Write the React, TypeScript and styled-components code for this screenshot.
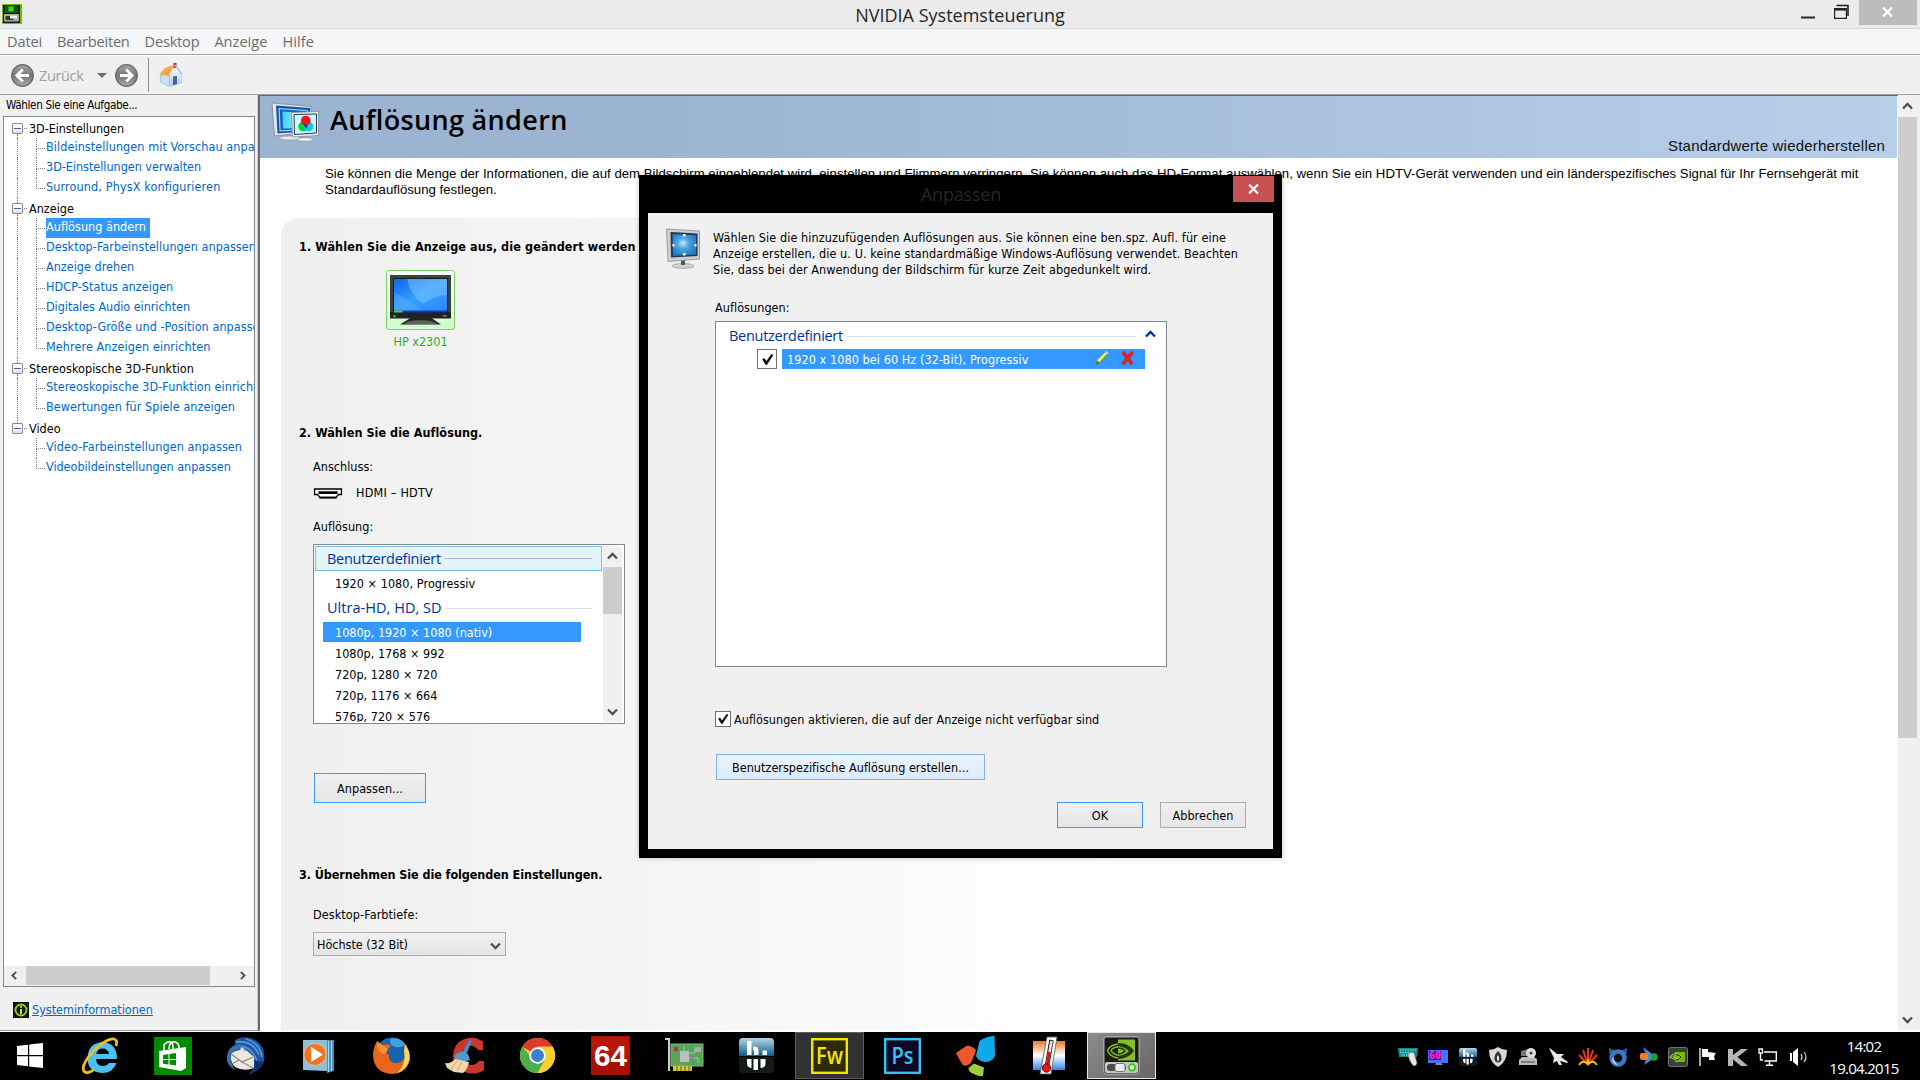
import React from "react";
import styled, { createGlobalStyle, css } from "styled-components";

const tahoma = '"DejaVu Sans Condensed", "DejaVu Sans", Tahoma, sans-serif';
const segoe = '"Open Sans", "Noto Sans", sans-serif';
const arial = '"Liberation Sans", Arial, sans-serif';

const Global = createGlobalStyle`
  * { box-sizing: border-box; }
  html, body { margin: 0; padding: 0; background: #000; }
  svg { display: block; flex: none; overflow: visible; }
`;

/* ---------- text ---------- */
const Text = styled.span<{ $ls?: number; $bold?: boolean; $color?: string }>`
  font-family: ${tahoma};
  font-size: 12.5px;
  line-height: 16px;
  white-space: nowrap;
  font-weight: ${(p) => (p.$bold ? 700 : 400)};
  letter-spacing: ${(p) => p.$ls ?? 0.04}px;
  color: ${(p) => p.$color ?? "#000"};
`;

const UiText = styled.span<{ $ls?: number; $size?: number; $color?: string }>`
  font-family: ${segoe};
  font-size: ${(p) => p.$size ?? 15}px;
  line-height: 20px;
  white-space: nowrap;
  letter-spacing: ${(p) => p.$ls ?? 0}px;
  color: ${(p) => p.$color ?? "#000"};
`;

/* ---------- window frame ---------- */
const Screen = styled.div`
  position: relative;
  width: 1920px;
  height: 1080px;
  overflow: hidden;
  display: flex;
  flex-direction: column;
  background: #f0f0f0;
`;

const TitleBar = styled.header`
  flex: none;
  height: 29px;
  display: grid;
  grid-template-columns: 1fr auto 1fr;
  align-items: start;
  background: #ebebeb;
  border-bottom: 1px solid #d9d9d9;
`;

const TitleIcon = styled.div`
  padding: 4px 0 0 2px;
`;

const WindowTitle = styled(UiText)`
  line-height: 30px;
`;

const CaptionButtons = styled.div`
  display: flex;
  justify-content: flex-end;
  padding-right: 3px;
`;

const CaptionButton = styled.div<{ $w: number; $close?: boolean }>`
  width: ${(p) => p.$w}px;
  height: 25px;
  display: flex;
  align-items: center;
  justify-content: center;
  padding: 0 1px 2px 0;
  background: ${(p) => (p.$close ? "#bcbcbc" : "transparent")};
`;

const MenuBar = styled.nav`
  flex: none;
  height: 26px;
  display: flex;
  gap: 15px;
  padding: 2px 0 0 7px;
  background: #f5f6f8;
  border-bottom: 1px solid #a0a0a0;
`;

const ToolBar = styled.div`
  flex: none;
  height: 40px;
  display: flex;
  align-items: center;
  padding: 0 0 0 11px;
  border-top: 1px solid #fff;
  border-bottom: 1px solid #a0a0a0;
`;

const BackLabel = styled(UiText)`
  margin: 0 14px 0 5px;
`;

const Caret = styled.div`
  border: 5px solid transparent;
  border-top-color: #6d6d6d;
  border-bottom: 0;
  margin-right: 8px;
`;

const ToolSeparator = styled.div`
  width: 1px;
  height: 34px;
  margin: 0 10px 0 10px;
  background: #8e8e8e;
`;

const Body = styled.div`
  flex: none;
  height: 937px;
  display: flex;
  background: #f0f0f0;
  border-bottom: 2px solid #fff;
`;

/* ---------- task tree ---------- */
const Sidebar = styled.aside`
  width: 260px;
  height: 936px;
  display: flex;
  flex-direction: column;
  padding: 1px 0 0 3px;
  border-right: 2px solid #696969;
  border-bottom: 1px solid #a0a0a0;
  box-shadow: inset -1px 0 0 #d0d0d0;
`;

const SidebarTitle = styled(Text)`
  height: 20px;
  line-height: 18px;
  padding-left: 3px;
  font-size: 11.6px;
`;

const TreeBox = styled.div`
  width: 252px;
  height: 871px;
  display: flex;
  flex-direction: column;
  overflow: hidden;
  padding-top: 1px;
  background: #fff;
  border: 1px solid #828790;
`;

const TreeRow = styled.div`
  flex: none;
  height: 20px;
  display: flex;
  padding-left: 7px;
  overflow: hidden;
`;

const Dotted = css`1px dotted #808080`;

const ToggleColumn = styled.div`
  flex: none;
  width: 13px;
  height: 20px;
  display: flex;
  flex-direction: column;
  align-items: center;
`;

const TrunkPiece = styled.div<{ $h: number; $on: boolean }>`
  width: 1px;
  height: ${(p) => p.$h}px;
  border-left: ${(p) => (p.$on ? Dotted : "1px solid transparent")};
`;

const Toggle = styled.div`
  width: 11px;
  height: 11px;
  display: flex;
  align-items: center;
  justify-content: center;
  border: 1px solid #8c8c8c;
  border-radius: 1px;
  background: linear-gradient(#fff 40%, #dcdcdc);
  &::after {
    content: "";
    width: 7px;
    height: 1px;
    background: #4a5fa8;
  }
`;

const GroupStub = styled.div`
  flex: none;
  width: 3px;
  height: 11px;
  margin: 0 2px 0 0;
  border-bottom: ${Dotted};
`;

const GroupName = styled(Text)`
  line-height: 22px;
`;

const Trunk = styled.div<{ $on: boolean }>`
  flex: none;
  width: 19px;
  height: 20px;
  margin-left: 6px;
  border-left: ${(p) => (p.$on ? Dotted : "1px solid transparent")};
`;

const Branch = styled.div`
  flex: none;
  width: 10px;
  height: 20px;
`;

const BranchTop = styled.div`
  width: 9px;
  height: 11px;
  border-left: ${Dotted};
  border-bottom: ${Dotted};
`;

const BranchBottom = styled.div<{ $on: boolean }>`
  height: 9px;
  border-left: ${(p) => (p.$on ? Dotted : "0")};
`;

const TreeLink = styled(Text)<{ $active?: boolean }>`
  flex: none;
  height: 20px;
  line-height: 18px;
  padding-right: 4px;
  color: ${(p) => (p.$active ? "#fff" : "#0066cc")};
  background: ${(p) => (p.$active ? "#3399ff" : "transparent")};
`;

const SystemInfo = styled.div`
  display: flex;
  gap: 3px;
  padding: 15px 0 0 10px;
`;

const SystemLink = styled(Text)`
  text-decoration: underline;
`;

/* ---------- scroll bars ---------- */
const HScroll = styled.div`
  flex: none;
  height: 20px;
  margin-top: auto;
  display: flex;
  align-items: flex-start;
  padding: 0 7px 0 6px;
  gap: 7px;
  background: #f0f0f0;
  & > svg {
    margin-top: 4px;
  }
`;

const HThumb = styled.div`
  width: 184px;
  height: 19px;
  margin-right: auto;
  background: #cdcdcd;
`;

const VScroll = styled.div<{ $w: number; $mt?: number }>`
  flex: none;
  width: ${(p) => p.$w}px;
  margin-top: ${(p) => p.$mt ?? 0}px;
  display: flex;
  flex-direction: column;
  align-items: stretch;
  background: #f0f0f0;
`;

const VButton = styled.div`
  height: 21px;
  display: flex;
  align-items: center;
  justify-content: center;
`;

const VThumb = styled.div<{ $h: number }>`
  height: ${(p) => p.$h}px;
  margin-bottom: auto;
  background: #cdcdcd;
`;

/* ---------- settings page ---------- */
const Page = styled.main`
  flex: none;
  width: 1638px;
  height: 935px;
  display: flex;
  flex-direction: column;
  background: #fff;
  border-top: 1px solid #696969;
  overflow: hidden;
`;

const PageHeader = styled.div`
  flex: none;
  width: 1637px;
  height: 62px;
  display: flex;
  justify-content: space-between;
  padding: 7px 12px 0 12px;
  background: linear-gradient(90deg, #9ab4d2 0%, #9ab4d2 25%, #b8cfea 100%);
`;

const HeaderTitle = styled.div`
  display: flex;
  gap: 10px;
`;

const PageTitle = styled.h1`
  margin: 0;
  font: 600 27px/34px ${segoe};
  letter-spacing: 0.34px;
  color: #000;
`;

const RestoreDefaults = styled.span`
  align-self: flex-end;
  font: 15px/24px ${arial};
  letter-spacing: 0.2px;
  color: #111;
`;

const Description = styled.p`
  flex: none;
  margin: 8px 0 0 65px;
  height: 52px;
  font: 13.2px/16px ${arial};
  letter-spacing: 0.011px;
  white-space: nowrap;
  color: #000;
`;

const SettingsPanel = styled.section`
  flex: 1;
  margin-left: 21px;
  padding: 21px 0 0 18px;
  display: flex;
  flex-direction: column;
  align-items: flex-start;
  border-radius: 18px 0 0 0;
  background: linear-gradient(90deg, #efefef 0, #f5f5f5 350px, #fff 840px);
`;

const StepHeading = styled(Text)<{ $mt?: number }>`
  margin-top: ${(p) => p.$mt ?? 0}px;
`;

const Field = styled.div<{ $mt: number }>`
  margin: ${(p) => p.$mt}px 0 0 14px;
  height: 16px;
  display: flex;
  align-items: center;
  gap: 14px;
`;

const DisplayChoice = styled.div`
  margin: 15px 0 0 87px;
  width: 69px;
  display: flex;
  flex-direction: column;
  align-items: center;
  gap: 4px;
`;

const DisplayTile = styled.div`
  width: 69px;
  height: 60px;
  padding: 4px 3px;
  border: 1px solid #7fd06c;
  border-radius: 3px;
  background: linear-gradient(#f6fff5, #d2f9ce);
`;

const ResolutionList = styled.div`
  margin: 9px 0 0 14px;
  width: 312px;
  height: 180px;
  padding: 1px;
  display: flex;
  overflow: hidden;
  background: #fff;
  border: 1px solid #828790;
`;

const ResolutionItems = styled.div`
  width: 288px;
  overflow: hidden;
`;

const GroupHeader = styled.div<{ $selected?: boolean }>`
  height: ${(p) => (p.$selected ? 25 : 28)}px;
  width: 287px;
  display: flex;
  align-items: center;
  gap: 4px;
  padding: 0 9px 0 11px;
  border: 1px solid ${(p) => (p.$selected ? "#70c0e7" : "transparent")};
  background: ${(p) => (p.$selected ? "#e5f3fb" : "transparent")};
`;

const Rule = styled.div<{ $strong?: boolean }>`
  flex: 1;
  height: 1px;
  background: ${(p) => (p.$strong ? "#a3b9e3" : "#d5dfe9")};
`;

const ResolutionRow = styled.div<{ $selected?: boolean; $h?: number }>`
  width: 258px;
  height: ${(p) => p.$h ?? 21}px;
  margin-left: 8px;
  padding: 2px 0 0 12px;
  display: flex;
  align-items: center;
  background: ${(p) => (p.$selected ? "#3399ff" : "transparent")};
`;

const Button = styled.button<{ $w: number; $h: number; $tone?: "default" | "hot" }>`
  width: ${(p) => p.$w}px;
  height: ${(p) => p.$h}px;
  padding: 2px 0 0;
  display: flex;
  align-items: center;
  justify-content: center;
  border: 1px solid
    ${(p) => (p.$tone === "default" ? "#3c99f5" : p.$tone === "hot" ? "#7eb4ea" : "#acacac")};
  background: ${(p) =>
    p.$tone === "hot" ? "linear-gradient(#ebf3fb, #dcebfc)" : "linear-gradient(#f0f0f0, #e5e5e5)"};
`;

const CustomizeSlot = styled.div`
  margin: 49px 0 0 15px;
`;

const DepthSelect = styled.div`
  margin: 9px 0 0 14px;
  width: 193px;
  height: 24px;
  display: flex;
  align-items: center;
  justify-content: space-between;
  padding: 2px 4px 0 3px;
  border: 1px solid #acacac;
  background: linear-gradient(#f0f0f0, #e5e5e5);
`;

/* ---------- dialog ---------- */
const Dialog = styled.div`
  position: absolute;
  left: 639px;
  top: 175px;
  width: 643px;
  height: 683px;
  display: flex;
  flex-direction: column;
  padding: 0 9px 9px;
  background: #000;
  box-shadow: 0 0 5px rgba(0, 0, 0, 0.25);
`;

const DialogCaption = styled.div`
  height: 38px;
  flex: none;
  display: grid;
  grid-template-columns: 41px 1fr 41px;
  justify-items: center;
  margin-right: -1px;
  padding: 1px 0 0;
`;

const DialogTitle = styled(UiText)`
  grid-column: 2;
  line-height: 36px;
`;

const DialogClose = styled.div`
  width: 41px;
  height: 26px;
  display: flex;
  align-items: center;
  justify-content: center;
  background: #c75050;
`;

const DialogBody = styled.div`
  flex: 1;
  display: flex;
  flex-direction: column;
  padding: 16px 27px 0 18px;
  background: #f0f0f0;
`;

const Intro = styled.div`
  height: 71px;
  display: flex;
  gap: 13px;
`;

const IntroText = styled.div`
  display: flex;
  flex-direction: column;
  padding-top: 1px;
`;

const DialogContent = styled.div`
  padding-left: 49px;
  display: flex;
  flex-direction: column;
  align-items: flex-start;
`;

const CustomBox = styled.div`
  margin-top: 5px;
  width: 452px;
  height: 346px;
  padding: 3px 10px 0 13px;
  background: #fff;
  border: 1px solid #828790;
`;

const CustomHeader = styled.div`
  height: 22px;
  display: flex;
  align-items: center;
  gap: 4px;
  & > svg {
    margin: 0 0 3px 5px;
  }
`;

const CustomRow = styled.div`
  display: flex;
  gap: 5px;
  margin: 2px 0 0 28px;
`;

const CheckBox = styled.div<{ $w: number; $h: number }>`
  width: ${(p) => p.$w}px;
  height: ${(p) => p.$h}px;
  display: flex;
  align-items: center;
  justify-content: center;
  border: 1px solid #707070;
  background: #fff;
`;

const CustomEntry = styled.div`
  width: 363px;
  height: 20px;
  display: flex;
  align-items: center;
  padding: 2px 10px 0 5px;
  background: #3399ff;
  & > svg {
    margin-left: 11px;
    margin-bottom: 5px;
  }
  & > svg:first-of-type {
    margin-left: auto;
  }
`;

const EnableRow = styled.label`
  margin-top: 44px;
  height: 16px;
  display: flex;
  align-items: center;
  gap: 3px;
`;

const EnableText = styled(Text)`
  line-height: 18px;
  padding-top: 1px;
`;

const CreateSlot = styled.div`
  margin: 27px 0 0 1px;
`;

const DialogButtons = styled.div`
  display: flex;
  justify-content: flex-end;
  gap: 17px;
  margin-top: 22px;
`;

/* ---------- task bar ---------- */
const TaskBar = styled.footer`
  flex: 1;
  display: flex;
  background: #000;
`;

const StartSlot = styled.div`
  width: 63px;
  padding: 11px 0 0 17px;
`;

const AppSlot = styled.div`
  width: 73px;
  height: 47px;
  display: flex;
  align-items: center;
  justify-content: center;
`;

const RunningApp = styled.div<{ $active?: boolean }>`
  width: 69px;
  height: 47px;
  display: flex;
  align-items: center;
  justify-content: center;
  border: 1px solid ${(p) => (p.$active ? "#e8e8e8" : "#5e5e5e")};
  background: ${(p) => (p.$active ? "linear-gradient(135deg, #8c8c8c, #666)" : "#323232")};
`;

const Tray = styled.div`
  margin-left: auto;
  display: flex;
`;

const TraySlot = styled.div`
  width: 30px;
  height: 50px;
  display: flex;
  align-items: center;
  justify-content: center;
`;

const Clock = styled.div`
  width: 107px;
  padding: 4px 5px 0 0;
  display: flex;
  flex-direction: column;
  align-items: center;
  gap: 2px;
`;

/* ---------- small glyphs ---------- */
const Chevron = ({ dir, color = "#505050", w = 11 }: { dir: "up" | "down" | "left" | "right"; color?: string; w?: number }) => {
  const d = {
    up: "M1 7.5 5.5 3 10 7.5",
    down: "M1 3.5 5.5 8 10 3.5",
    left: "M7.5 1 3 5.5 7.5 10",
    right: "M3.5 1 8 5.5 3.5 10",
  }[dir];
  return (
    <svg width={w} height={11} viewBox="0 0 11 11">
      <path d={d} fill="none" stroke={color} strokeWidth="2.3" />
    </svg>
  );
};

const Check = ({ s }: { s: number }) => (
  <svg width={s} height={s} viewBox="0 0 12 12">
    <path d="M1 5.8 3 4.6 5 7.4 9.6 1 11.4 1.8 5.4 11 4.4 11Z" fill="#111" />
  </svg>
);

const NavArrow = ({ forward }: { forward?: boolean }) => (
  <svg width="23" height="23" viewBox="0 0 23 23">
    <defs>
      <linearGradient id="nav" x1="0" y1="0" x2="0" y2="1">
        <stop offset="0" stopColor="#a6a6a6" />
        <stop offset=".5" stopColor="#777" />
        <stop offset="1" stopColor="#a8a8a8" />
      </linearGradient>
    </defs>
    <circle cx="11.5" cy="11.5" r="10.800" fill="url(#nav)" stroke="#666" strokeWidth="1.200" />
    <path
      d={forward ? "M5 11.5H17M11.2 5.5 17.200 11.5 11.2 17.500" : "M18 11.5H6M11.8 5.500 5.800 11.5 11.8 17.500"}
      fill="none"
      stroke="#fff"
      strokeWidth="2.800"
    />
  </svg>
);

const House = () => (
  <svg width="24" height="24" viewBox="0 0 24 24">
    <defs>
      <linearGradient id="wall" x1="0" y1="0" x2="0" y2="1">
        <stop offset="0" stopColor="#fff" />
        <stop offset="1" stopColor="#a9c9ef" />
      </linearGradient>
      <linearGradient id="roof" x1="0" y1="0" x2="1" y2="1">
        <stop offset="0" stopColor="#ffc36b" />
        <stop offset="1" stopColor="#f58a1f" />
      </linearGradient>
    </defs>
    <path d="M9.500 11 16 3 22.500 11.500V20L10.500 23.500Z" fill="url(#wall)" stroke="#a8c2e2" strokeWidth=".6" />
    <path d="M1.500 12 10.500 12V23.500L1.500 19.500Z" fill="#c9dff6" stroke="#8fb1dc" strokeWidth=".6" />
    <rect x="14.500" y="0" width="3" height="5" fill="#c0281c" />
    <path d="M6 5 15.500 1.500 9.500 12.500 0 11.500Z" fill="url(#roof)" />
    <path d="M15.800 2 23.500 11.500" stroke="#a9c4e8" strokeWidth="1.500" />
    <path d="M14 13.500 18 13V21L14 22.300Z" fill="#4d5f9c" />
  </svg>
);

const NvidiaTitleIcon = () => (
  <svg width="20" height="20" viewBox="0 0 20 20">
    <rect width="20" height="20" fill="#76b900" />
    <rect x="1" y="1" width="17" height="18" fill="#14200c" />
    <rect x="3" y="1" width="13" height="8" fill="#17560f" />
    <rect x="6.5" y="2.5" width="5" height="5" fill="#35e01b" />
    <rect x="2" y="10" width="15" height="7.5" rx="1" fill="#a9a9a9" />
    <rect x="3.5" y="12" width="8" height="4" rx="1" fill="#333" />
    <rect x="8" y="11.5" width="7" height="3" fill="#eee" />
  </svg>
);

const ResolutionIcon = () => (
  <svg width="48" height="40" viewBox="0 0 48 40">
    <defs>
      <linearGradient id="rs" x1="0" x2="1">
        <stop offset="0" stopColor="#3ed2f2" />
        <stop offset="1" stopColor="#c3f3fb" />
      </linearGradient>
    </defs>
    <ellipse cx="18" cy="35" rx="11" ry="2" fill="#e4e8ea" stroke="#858c90" strokeWidth=".6" />
    <path d="M0 0 39 3.500V29L2.500 33Z" fill="#e4e7ea" stroke="#7d8891" strokeWidth=".8" />
    <path d="M4 2.500 38 5V28L5.500 30.500Z" fill="#1552ae" />
    <path d="M6.500 5 36 7V27L7.500 28.500Z" fill="#8fdcf6" />
    <path d="M7.800 6.300 35 8V26L8.500 27.200Z" fill="#1b62bb" />
    <path d="M10.500 8.500 34 10V25L11 25.500Z" fill="url(#rs)" />
    <ellipse cx="33" cy="36.500" rx="8" ry="1.800" fill="#f0f2f3" stroke="#858c90" strokeWidth=".6" />
    <path d="M19.500 9.500 46.500 8.500V32.500L20.500 34Z" fill="#eef0f1" stroke="#858d93" strokeWidth=".8" />
    <path d="M22 11.500 44.500 11V30L22.500 31.500Z" fill="#c9f7fd" stroke="#1e3f60" strokeWidth="1" />
    <circle cx="31.300" cy="23.500" r="5" fill="#00d22f" />
    <circle cx="36.400" cy="23.500" r="5" fill="#18c7ee" />
    <circle cx="33.800" cy="17.500" r="4.800" fill="#f0141e" />
    <path d="M31.300 21 36.500 21 34 25.500Z" fill="#43306d" />
    <path d="M34 19.500 36.500 22H34Z" fill="#e51bd5" />
  </svg>
);

const DisplayIcon = () => (
  <svg width="61" height="50" viewBox="0 0 61 50">
    <defs>
      <linearGradient id="ds" x1="0" y1="0" x2="1" y2="1">
        <stop offset="0" stopColor="#1264ea" />
        <stop offset=".5" stopColor="#37a0ff" />
        <stop offset="1" stopColor="#2b86f8" />
      </linearGradient>
    </defs>
    <path d="M22 42H40L51 49.5H10Z" fill="#222" />
    <path d="M18 46.5Q30 44 43 46.5L47 49H14Z" fill="#606060" />
    <rect width="61" height="43" fill="#3d4041" />
    <rect x="0" y="37" width="61" height="6.5" fill="#202324" />
    <rect x="3" y="3" width="55" height="35" fill="#16191b" />
    <rect x="4" y="4" width="53" height="33" fill="url(#ds)" />
    <path d="M17 4H57V20Q43 21 33 29 20 19 17 4Z" fill="#7cc5ff" opacity=".5" />
    <path d="M4 17Q25 30 35 37H4Z" fill="#58b4ff" opacity=".4" />
    <rect x="4" y="35.5" width="53" height="2" fill="#1237c4" />
    <rect x="4" y="35.5" width="8.500" height="2" fill="#5fd026" />
    <rect x="3.500" y="40.200" width="2" height="2" fill="#20e030" />
    <rect x="52.500" y="40" width="4" height="1.500" fill="#777" />
  </svg>
);

const HdmiIcon = () => (
  <svg width="29" height="11" viewBox="0 0 29 11">
    <path d="M1.600 1H28.400V6.500H25.500L23 9.500H7L4.500 6.500H1.600Z" fill="#fff" stroke="#000" strokeWidth="1.300" />
    <path d="M5.500 3.200H24.500V6H5.500ZM6.500 8.800H23.500V10.500H6.500Z" fill="#000" />
  </svg>
);

const DialogIcon = () => (
  <svg width="34" height="41" viewBox="0 0 34 41">
    <defs>
      <radialGradient id="dg" cx=".45" cy=".42" r=".6">
        <stop offset="0" stopColor="#c9eaff" />
        <stop offset=".4" stopColor="#4ea6dd" />
        <stop offset="1" stopColor="#2379c2" />
      </radialGradient>
    </defs>
    <ellipse cx="17" cy="37" rx="11" ry="2.500" fill="#d0d0d0" stroke="#8f8f8f" strokeWidth=".6" />
    <rect x="15" y="31" width="4" height="5" fill="#555" />
    <path d="M.5 0 33.500 2V30L2 32.500Z" fill="#cfcfcf" stroke="#8b8b8b" strokeWidth=".8" />
    <path d="M4.500 3 31.500 4.500V27L5 28.500Z" fill="#1c3a57" />
    <path d="M6.500 5 30 6.200V25.500L7 27Z" fill="url(#dg)" />
    <path d="M17 5h2.500v2.500h-2.500zM17 24h2.500v2.500h-2.500zM6.500 15h2v2.500h-2zM28.500 15h2v2.500h-2z" fill="#fff" />
  </svg>
);

const SystemInfoIcon = () => (
  <svg width="16" height="16" viewBox="0 0 16 16">
    <rect width="16" height="16" fill="#10150c" />
    <circle cx="8" cy="8" r="5.500" fill="none" stroke="#9ad21e" strokeWidth="1.800" />
    <path d="M7 4h2v1.800H7zM7 7h2v5H7z" fill="#b6ea3a" />
  </svg>
);

const Pencil = () => (
  <svg width="14" height="14" viewBox="0 0 14 14">
    <path d="M1 13.500 1.500 9 9 1.500 13 4 5 12Z" fill="#6f9f3c" />
    <path d="M2 9.500 10 1.500 12 2.800 4 11.500Z" fill="#e9ef8c" />
    <path d="M10 1.200 11.500 0 13.500 2 12.500 3.500Z" fill="#e8c9c0" />
    <path d="M1 13.500 4.500 12 2.500 10Z" fill="#4b5a35" />
  </svg>
);

const RedCross = () => (
  <svg width="15" height="14" viewBox="0 0 15 14">
    <path d="M3 1 12 13M12.500 1.200 3 13" stroke="#9f2430" strokeWidth="3.600" />
    <path d="M3 1 12 13M12.500 1.200 3 13" stroke="#ee2418" strokeWidth="2.600" />
  </svg>
);

/* ---------- application icons ---------- */
const WindowsLogo = () => (
  <svg width="26" height="25" viewBox="0 0 26 25">
    <path d="M0 3 11 1.700V12H0ZM12.200 1.500 26 0V12H12.200ZM0 13.200H11V23.300L0 22ZM12.200 13.200H26V25L12.200 23.500Z" fill="#fff" />
  </svg>
);

const ExplorerIcon = () => (
  <svg width="38" height="38" viewBox="0 0 38 38">
    <path
      d="M36 22H15Q15.500 29 21.500 29 26 29 28 26H35.500Q32 36 21 36 6.500 35 6.500 21 7 6 21.500 5 36 6 36 22ZM15.200 17H28Q27 11.500 21.500 11.500 16.500 11.500 15.200 17Z"
      fill="#4cc0f2"
      fillRule="evenodd"
    />
    <path d="M35 9Q37 3 33 2 28 1 18 9 6 19 2.500 29 1 36 7 35.500 10 35 13 32.500" fill="none" stroke="#f7be1c" strokeWidth="2.800" />
  </svg>
);

const StoreIcon = () => (
  <svg width="38" height="38" viewBox="0 0 38 38">
    <rect width="38" height="38" fill="#008a00" />
    <path d="M10 14V8Q13 4 17 5 19 6 19 12M15 12Q15 4 21 5 25 6 25 11" fill="none" stroke="#fff" strokeWidth="1.600" />
    <path d="M5 14 32 10V31L27 34 5 30Z" fill="#fff" />
    <path d="M9 18 14.500 17V22H9ZM15.500 17 22 16V22H15.500ZM9 23H14.500V27.500L9 26.800ZM15.500 23H22V28.500L15.500 27.600Z" fill="#008a00" />
  </svg>
);

const ThunderbirdIcon = () => (
  <svg width="40" height="38" viewBox="0 0 40 38">
    <path d="M9 3Q15-1 24 1 38 5 38.500 20 38 32 24 37 28 31 27 27L8 12Q9 8 9 3Z" fill="#1f56a3" />
    <path d="M10 5Q27 3 33 18M11 9Q25 8 31 24M20 2Q34 6 36 20" fill="none" stroke="#5795d3" strokeWidth="1.800" />
    <path d="M5 15 19 12 28 20 28 31Q18 35 9 30 3 24 5 15Z" fill="#ece8df" />
    <path d="M5 17 16 25 27 20M16 25 27 31M13 23 6 27" fill="none" stroke="#8d877d" strokeWidth="1.100" />
    <path d="M7 9Q0 13 1 24 3 30 9 33 4 25 5 17L12 12 21 14Q15 6 7 9Z" fill="#3b6cab" />
    <path d="M15 10Q18 11 19 13L14 14Z" fill="#cfe0f3" />
    <path d="M28 23Q31 31 22 37 34 35 37 25Z" fill="#122f6b" />
  </svg>
);

const MediaPlayerIcon = () => (
  <svg width="33" height="34" viewBox="0 0 33 34">
    <path d="M22 1H32V32L25 34Z" fill="#4a8fb5" />
    <path d="M1 1H25V32L1 31Z" fill="#8bc0d8" />
    <path d="M26.500 2V33M29.500 2V32" stroke="#a4dcee" />
    <circle cx="13" cy="15.500" r="11" fill="#ee7420" stroke="#f8c69c" strokeWidth=".8" />
    <path d="M9 8V23L21 15.500Z" fill="#fff" />
  </svg>
);

const FirefoxIcon = () => (
  <svg width="37" height="38" viewBox="0 0 37 38">
    <circle cx="19" cy="17" r="16.500" fill="#1664ac" />
    <path d="M17 2Q26-1 32 7 27 13 18 8Z" fill="#3fa3de" />
    <path d="M4 4 10 8Q15 6 18 9L14 13Q12 17 16 18 15 24 21 26 31 27 33 17L31 8Q38 14 37 22 34 37 18 37 1 35 0 19 0 11 4 4Z" fill="#e9641c" />
    <path d="M32 7Q37 13 36.500 22 34 33 24 36 34 27 31 14Z" fill="#fbd74b" />
    <path d="M4 5 9 8 15 12 12 17Q3 16 4 5Z" fill="#f59230" />
  </svg>
);

const CCleanerIcon = () => (
  <svg width="40" height="38" viewBox="0 0 40 38">
    <path d="M38 4V13H33Q29 8 24 9 17 11 17 19 18 28 26 28 31 28 34 24H39V33Q32 38 23 36 8 33 8 19 9 3 24 1 31 0 35 3Z" fill="#c8382c" />
    <path d="M24 3 27 4 20 20 16 18Z" fill="#3d91cf" />
    <path d="M10 18Q16 12 23 17L25 23Q18 26 10 22Z" fill="#4c9bd3" />
    <path d="M10 22 24 25Q23 32 18 36L9 35 2 31 0 26Q6 27 10 22Z" fill="#f1d9ac" />
    <path d="M12 24 6 32M17 25 12 34" stroke="#c3a271" />
  </svg>
);

const ChromeIcon = () => (
  <svg width="35" height="35" viewBox="0 0 36 36">
    <circle cx="18" cy="18" r="18" fill="#fbd02d" />
    <path d="M18 18 2.400 9A18 18 0 0 1 33.600 9H18Z" fill="#df3a2f" />
    <path d="M18 27 2.400 9A18 18 0 0 0 18 36L26 22Z" fill="#4caf4a" />
    <path d="M18 9H33.600A18 18 0 0 1 18 36L26 22Z" fill="#fbd02d" />
    <circle cx="18" cy="18" r="8.500" fill="#fff" />
    <circle cx="18" cy="18" r="6.700" fill="#3e7fd0" />
  </svg>
);

const Aida64Icon = () => (
  <svg width="39" height="39" viewBox="0 0 39 39">
    <rect width="39" height="39" fill="#a80f05" />
    <rect x="1" y="1" width="37" height="19" fill="#b81608" />
    <text x="19.500" y="29.500" textAnchor="middle" textLength="33" lengthAdjust="spacingAndGlyphs" fontFamily="Liberation Sans" fontWeight="700" fontSize="29" fill="#fff">
      64
    </text>
  </svg>
);

const CardIcon = () => (
  <svg width="40" height="35" viewBox="0 0 40 35">
    <path d="M1 1H5V33" fill="none" stroke="#cfcfcf" strokeWidth="2" />
    <rect x="7" y="6" width="32" height="22" fill="#57a45a" stroke="#79c37a" />
    <path d="M9 28H28V33H9Z" fill="#d8c33f" />
    <path d="M13 28V33M17 28V33M21 28V33M25 28V33" stroke="#5d6a20" />
    <rect x="16" y="13" width="9" height="11" fill="#bdbdbd" />
    <rect x="10" y="9" width="4" height="4" fill="#b23a32" />
    <rect x="31" y="9" width="6" height="5" fill="#aaa" />
    <path d="M25 15H31V11M25 20H34V25M20 13V8" fill="none" stroke="#9ad49b" />
    <rect x="26" y="17" width="4" height="4" fill="#888" />
  </svg>
);

const HwInfoIcon = ({ s = 35 }: { s?: number }) => (
  <svg width={s} height={s} viewBox="0 0 35 35">
    <defs>
      <linearGradient id="hw" x1="0" y1="0" x2="0" y2="1">
        <stop offset="0" stopColor="#b4d8ea" />
        <stop offset="1" stopColor="#0e5a88" />
      </linearGradient>
    </defs>
    <path d="M0 19H35V31Q35 35 31 35H4Q0 35 0 31Z" fill="#14191c" />
    <path d="M0 18V4Q0 0 4 0H31Q35 0 35 4V18Z" fill="url(#hw)" />
    <path d="M8 3h4.500v14H8zM14 8.500h1.500q4 0 4 4V17H15v-4.500l-1-1zM23.500 12.500h4.500V17h-4.500z" fill="#fff" />
    <path d="M8 21h4.500v9Q8 29.500 8 25.500zM14.500 21h4.500v11h-4.500zM21.500 21h5v4.500q0 4.500-5 4.500z" fill="#fff" />
  </svg>
);

const AdobeIcon = ({ label, fg, bg }: { label: string; fg: string; bg: string }) => (
  <svg width="37" height="36" viewBox="0 0 37 36">
    <rect x="1.200" y="1.200" width="34.600" height="33.600" fill={bg} stroke={fg} strokeWidth="2.400" />
    <text x="18.500" y="26" textAnchor="middle" textLength={label === "Fw" ? 27 : 22} lengthAdjust="spacingAndGlyphs" fontFamily="Open Sans" fontWeight="600" fontSize="23" fill={fg}>
      {label}
    </text>
  </svg>
);

const PetalsIcon = () => (
  <svg width="40" height="40" viewBox="0 0 40 40">
    <path d="M23.500 5Q31 0 38.500 0L39 20Q36 26 29 26 22 25 20 20Z" fill="#12a9ea" />
    <path d="M0 17 11 9.500Q17 10 20 14.500L15 27Q10 31 7 29 4 25 0 17Z" fill="#f0562b" />
    <path d="M18 27.500 28 31.500 27 40Q24 41 19 38.500 12 36 12.500 32Z" fill="#9fce3c" />
  </svg>
);

const ThermoIcon = () => (
  <svg width="34" height="37" viewBox="0 0 34 37">
    <defs>
      <linearGradient id="tm" x1="0" y1="0" x2="0" y2="1">
        <stop offset="0" stopColor="#f0792c" />
        <stop offset=".5" stopColor="#fff" />
        <stop offset="1" stopColor="#3d7ff0" />
      </linearGradient>
    </defs>
    <rect x="1" y="4" width="32" height="29" fill="url(#tm)" />
    <path d="M15 0H25L19 37H8Z" fill="#fff" stroke="#406b40" strokeWidth=".8" />
    <path d="M19.500 3 15 29" stroke="#222" strokeWidth="4.500" />
    <path d="M19.500 4 15 29" stroke="#f3dede" strokeWidth="2.600" />
    <path d="M17.500 15 15 30" stroke="#e01212" strokeWidth="3" />
    <circle cx="14.500" cy="31" r="4.200" fill="#e81616" stroke="#6c0808" />
  </svg>
);

const NvidiaPanelIcon = () => (
  <svg width="37" height="38" viewBox="0 0 37 38">
    <rect x="1" y="0" width="35" height="37" rx="2" fill="#171b12" stroke="#d5d5d5" strokeWidth=".8" />
    <path d="M15 2.500H32V23.500H15Z" fill="#86bd2c" />
    <path d="M15 6Q26 6 31 14 25 22 15 22V19Q23 18 26 14 22 10 15 9Z" fill="#22370f" />
    <path d="M15 11Q20 11 22 14 19 17 15 17 12 16 11 14" fill="none" stroke="#22370f" strokeWidth="1.600" />
    <path d="M15 7Q7 8 4.500 13.500 7 20 15 21M15 10Q10 10 8 13.500 10 17.500 15 18" fill="none" stroke="#86bd2c" strokeWidth="1.500" />
    <rect x="2" y="25" width="33" height="11" rx="2" fill="#c9c9c9" />
    <rect x="4" y="27" width="19" height="7" rx="3" fill="#4d4d4d" />
    <rect x="12" y="26.500" width="10" height="8" rx="2" fill="#eee" stroke="#777" />
    <circle cx="29" cy="30.500" r="3.300" fill="#ccffc3" stroke="#45c325" strokeWidth="2" />
  </svg>
);

/* ---------- notification icons ---------- */
const trayIcons: React.ReactNode[] = [
  <svg width="20" height="20" viewBox="0 0 20 20">
    <path d="M0 1H20L19 10H1Z" fill="#0e8f8d" />
    <path d="M2 3H18M2 5.500H12M3 8H10" stroke="#8be2df" strokeDasharray="1.500 1" />
    <path d="M10 7Q13 4 16 6L19 16Q18 20 15 18.500 11 14 10 7Z" fill="#e6e6e6" stroke="#777" strokeWidth=".6" />
  </svg>,
  <svg width="20" height="20" viewBox="0 0 20 20">
    <rect x="0" y="3" width="20" height="13" fill="#4272ff" />
    <rect x="1" y="4" width="12" height="9" fill="#5a1560" />
    <path d="M8 16H13L15 18H7Z" fill="#888" />
    <text x="1" y="12" fontFamily="DejaVu Sans Mono" fontWeight="700" fontSize="10" textLength="12" lengthAdjust="spacingAndGlyphs" fill="#ff27ff">
      60
    </text>
  </svg>,
  <HwInfoIcon s={18} />,
  <svg width="18" height="20" viewBox="0 0 18 20">
    <path d="M9 0Q13 3 18 3 18 15 9 20 0 15 0 3 5 3 9 0Z" fill="#d8d8d8" />
    <path d="M9 4Q14 9 12 14Q9 17 6 14 4 9 9 4Z" fill="#333" />
    <path d="M9 8Q11 11 9 15 7 11 9 8Z" fill="#fff" />
  </svg>,
  <svg width="18" height="18" viewBox="0 0 18 18">
    <path d="M0 12 3 9H15L18 11V17H0Z" fill="#bcbcbc" />
    <path d="M2 3 9 1V8H2Z" fill="#777" />
    <circle cx="12" cy="5" r="5" fill="#ddd" />
    <circle cx="12" cy="5" r="1.600" fill="#444" />
    <path d="M2 14H16" stroke="#444" />
  </svg>,
  <svg width="19" height="18" viewBox="0 0 19 18">
    <path d="M0 0 2 1 8 6 15 6 12 9 19 14 18 15 11 13 13 17 10 17 8 13 4 15 5 10Z" fill="#e7e7e7" />
  </svg>,
  <svg width="20" height="18" viewBox="0 0 20 18">
    <path d="M10 17V0M10 17 5 2M10 17 15 2M10 17 1 7M10 17 19 7" stroke="#e5341d" strokeWidth="2.100" />
    <path d="M1 17Q5 11 10 16 15 11 19 17M10 17V11" fill="none" stroke="#f3c52a" strokeWidth="1.800" />
  </svg>,
  <svg width="20" height="19" viewBox="0 0 20 19">
    <path d="M1 0 6 2H14L19 0V5L16 8H4L1 5Z" fill="#23579f" />
    <circle cx="10" cy="10" r="6.500" fill="#0d0d0d" stroke="#3a79c2" strokeWidth="4.500" />
    <path d="M4 12Q4 16 10 17.500 6 13 5 9Z" fill="#a9cdf3" />
  </svg>,
  <svg width="19" height="20" viewBox="0 0 19 20">
    <path d="M4 0 17 10 5 18 8 10Z" fill="#4d86d8" />
    <rect x="1" y="6" width="8" height="7" rx="2" fill="#e98226" />
    <circle cx="15" cy="10" r="3.700" fill="#18a42d" />
  </svg>,
  <svg width="20" height="20" viewBox="0 0 20 20">
    <rect x=".5" y=".5" width="19" height="19" rx="2" fill="#3a3d3d" stroke="#777" />
    <path d="M7 5H17V15H7Z" fill="#76b900" />
    <path d="M2 10Q7 4 13 9 9 15 2 10ZM5 10Q8 7 10 10 8 12 6 10" fill="none" stroke="#89c82a" strokeWidth="1.200" />
    <path d="M8 8Q11 7 13 10 11 13 8 13" fill="none" stroke="#203300" />
  </svg>,
  <svg width="18" height="18" viewBox="0 0 18 18">
    <path d="M1 0V18" stroke="#fff" strokeWidth="1.300" />
    <path d="M3 1H9V4L17 5Q14 8 16 12H10V9H3Z" fill="#fff" />
  </svg>,
  <svg width="20" height="17" viewBox="0 0 20 17">
    <path d="M0 0H5V6L13 0H20L9.500 8 20 17H13L5 10.500V17H0Z" fill="#b5b5b5" />
  </svg>,
  <svg width="20" height="18" viewBox="0 0 20 18">
    <path d="M6 4H18.300V13H6.500M11.500 13V17M8 17.300H15M2.500 5V12H5" fill="none" stroke="#fff" strokeWidth="1.400" />
    <path d="M1 1H4.500V5H1Z" fill="none" stroke="#fff" strokeWidth="1.300" />
  </svg>,
  <svg width="19" height="20" viewBox="0 0 19 20">
    <path d="M1 6H3V14H1ZM4 5 9 1V19L4 15Z" fill="#fff" />
    <path d="M12 7Q14 10 12 13M15 5Q19 10 15 15" fill="none" stroke="#ddd" strokeWidth="1.200" />
  </svg>,
];

/* ---------- data ---------- */
type Entry = [label: string, spacing: number];

const tree: { name: Entry; items: Entry[] }[] = [
  {
    name: ["3D-Einstellungen", -0.07],
    items: [
      ["Bildeinstellungen mit Vorschau anpassen", 0.08],
      ["3D-Einstellungen verwalten", -0.02],
      ["Surround, PhysX konfigurieren", 0.13],
    ],
  },
  {
    name: ["Anzeige", 0.02],
    items: [
      ["Auflösung ändern", 0.04],
      ["Desktop-Farbeinstellungen anpassen", 0.06],
      ["Anzeige drehen", 0.02],
      ["HDCP-Status anzeigen", 0.06],
      ["Digitales Audio einrichten", -0.04],
      ["Desktop-Größe und -Position anpassen", 0.06],
      ["Mehrere Anzeigen einrichten", 0.09],
    ],
  },
  {
    name: ["Stereoskopische 3D-Funktion", 0.06],
    items: [
      ["Stereoskopische 3D-Funktion einrichten", 0.06],
      ["Bewertungen für Spiele anzeigen", 0.06],
    ],
  },
  {
    name: ["Video", 0.04],
    items: [
      ["Video-Farbeinstellungen anpassen", 0.09],
      ["Videobildeinstellungen anpassen", -0.02],
    ],
  },
];

const menu: Entry[] = [
  ["Datei", -0.15],
  ["Bearbeiten", -0.23],
  ["Desktop", -0.22],
  ["Anzeige", 0],
  ["Hilfe", 0.05],
];

const apps: React.ReactNode[] = [
  <ExplorerIcon />,
  <StoreIcon />,
  <ThunderbirdIcon />,
  <MediaPlayerIcon />,
  <FirefoxIcon />,
  <CCleanerIcon />,
  <ChromeIcon />,
  <Aida64Icon />,
  <CardIcon />,
  <HwInfoIcon />,
  <RunningApp>
    <AdobeIcon label="Fw" fg="#f2e500" bg="#2c2a00" />
  </RunningApp>,
  <AdobeIcon label="Ps" fg="#31c5f0" bg="#0c0824" />,
  <PetalsIcon />,
  <ThermoIcon />,
  <RunningApp $active>
    <NvidiaPanelIcon />
  </RunningApp>,
];

/* ---------- sections ---------- */
const TaskTree = () => (
  <TreeBox>
    {tree.map((group, g) => {
      const more = g < tree.length - 1;
      return (
        <React.Fragment key={group.name[0]}>
          <TreeRow>
            <ToggleColumn>
              <TrunkPiece $h={5} $on={g > 0} />
              <Toggle />
              <TrunkPiece $h={4} $on={more} />
            </ToggleColumn>
            <GroupStub />
            <GroupName $ls={group.name[1]}>{group.name[0]}</GroupName>
          </TreeRow>
          {group.items.map(([label, ls], i) => (
            <TreeRow key={label}>
              <Trunk $on={more} />
              <Branch>
                <BranchTop />
                <BranchBottom $on={i < group.items.length - 1} />
              </Branch>
              <TreeLink $ls={ls} $active={label === "Auflösung ändern"}>
                {label}
              </TreeLink>
            </TreeRow>
          ))}
        </React.Fragment>
      );
    })}
    <HScroll>
      <Chevron dir="left" w={9} />
      <HThumb />
      <Chevron dir="right" w={9} />
    </HScroll>
  </TreeBox>
);

const Settings = () => (
  <SettingsPanel>
    <StepHeading $bold $ls={0.11}>
      1. Wählen Sie die Anzeige aus, die geändert werden
    </StepHeading>
    <DisplayChoice>
      <DisplayTile>
        <DisplayIcon />
      </DisplayTile>
      <Text $color="#22b122" $ls={0}>
        HP x2301
      </Text>
    </DisplayChoice>
    <StepHeading $bold $mt={75} $ls={0.046}>
      2. Wählen Sie die Auflösung.
    </StepHeading>
    <Field $mt={18}>
      <Text>Anschluss:</Text>
    </Field>
    <Field $mt={10}>
      <HdmiIcon />
      <Text $ls={0.22}>HDMI – HDTV</Text>
    </Field>
    <Field $mt={18}>
      <Text>Auflösung:</Text>
    </Field>
    <ResolutionList>
      <ResolutionItems>
        <GroupHeader $selected>
          <UiText $size={14.5} $ls={-0.28} $color="#003399">
            Benutzerdefiniert
          </UiText>
          <Rule $strong />
        </GroupHeader>
        <ResolutionRow $h={23}>
          <Text $ls={0.07}>1920 × 1080, Progressiv</Text>
        </ResolutionRow>
        <GroupHeader>
          <UiText $size={14.5} $ls={0.04} $color="#003399">
            Ultra-HD, HD, SD
          </UiText>
          <Rule />
        </GroupHeader>
        <ResolutionRow $selected $h={20}>
          <Text $color="#fff" $ls={0}>
            1080p, 1920 × 1080 (nativ)
          </Text>
        </ResolutionRow>
        {["1080p, 1768 × 992", "720p, 1280 × 720", "720p, 1176 × 664", "576p, 720 × 576"].map((r) => (
          <ResolutionRow key={r}>
            <Text $ls={0}>{r}</Text>
          </ResolutionRow>
        ))}
      </ResolutionItems>
      <VScroll $w={19}>
        <VButton>
          <Chevron dir="up" />
        </VButton>
        <VThumb $h={47} />
        <VButton>
          <Chevron dir="down" />
        </VButton>
      </VScroll>
    </ResolutionList>
    <CustomizeSlot>
      <Button $w={112} $h={30} $tone="default">
        <Text $ls={0.06}>Anpassen...</Text>
      </Button>
    </CustomizeSlot>
    <StepHeading $bold $mt={64} $ls={-0.075}>
      3. Übernehmen Sie die folgenden Einstellungen.
    </StepHeading>
    <Field $mt={24}>
      <Text $ls={0.1}>Desktop-Farbtiefe:</Text>
    </Field>
    <DepthSelect>
      <Text $ls={-0.02}>Höchste (32 Bit)</Text>
      <Chevron dir="down" />
    </DepthSelect>
  </SettingsPanel>
);

const CustomizeDialog = () => (
  <Dialog>
    <DialogCaption>
      <DialogTitle $size={18} $ls={-0.2} $color="#262626">
        Anpassen
      </DialogTitle>
      <DialogClose>
        <svg width="11" height="10" viewBox="0 0 11 10">
          <path d="M1 .5 10 9.500M10 .5 1 9.500" stroke="#fff" strokeWidth="2.200" />
        </svg>
      </DialogClose>
    </DialogCaption>
    <DialogBody>
      <Intro>
        <DialogIcon />
        <IntroText>
          <Text $ls={0.101}>Wählen Sie die hinzuzufügenden Auflösungen aus. Sie können eine ben.spz. Aufl. für eine</Text>
          <Text $ls={0.078}>Anzeige erstellen, die u. U. keine standardmäßige Windows-Auflösung verwendet. Beachten</Text>
          <Text $ls={0.09}>Sie, dass bei der Anwendung der Bildschirm für kurze Zeit abgedunkelt wird.</Text>
        </IntroText>
      </Intro>
      <DialogContent>
        <Text $ls={0.06}>Auflösungen:</Text>
        <CustomBox>
          <CustomHeader>
            <UiText $size={14.5} $ls={-0.28} $color="#003399">
              Benutzerdefiniert
            </UiText>
            <Rule />
            <Chevron dir="up" color="#003399" />
          </CustomHeader>
          <CustomRow>
            <CheckBox $w={20} $h={20}>
              <Check s={13} />
            </CheckBox>
            <CustomEntry>
              <Text $color="#fff" $ls={0.083}>
                1920 x 1080 bei 60 Hz (32-Bit), Progressiv
              </Text>
              <Pencil />
              <RedCross />
            </CustomEntry>
          </CustomRow>
        </CustomBox>
        <EnableRow>
          <CheckBox $w={16} $h={16}>
            <Check s={12} />
          </CheckBox>
          <EnableText $ls={0.032}>Auflösungen aktivieren, die auf der Anzeige nicht verfügbar sind</EnableText>
        </EnableRow>
        <CreateSlot>
          <Button $w={269} $h={26} $tone="hot">
            <Text $ls={0.028}>Benutzerspezifische Auflösung erstellen...</Text>
          </Button>
        </CreateSlot>
      </DialogContent>
      <DialogButtons>
        <Button $w={86} $h={26} $tone="default">
          <Text>OK</Text>
        </Button>
        <Button $w={86} $h={26}>
          <Text>Abbrechen</Text>
        </Button>
      </DialogButtons>
    </DialogBody>
  </Dialog>
);

export default function App() {
  return (
    <Screen>
      <Global />
      <TitleBar>
        <TitleIcon>
          <NvidiaTitleIcon />
        </TitleIcon>
        <WindowTitle $size={18} $ls={0} $color="#262626">
          NVIDIA Systemsteuerung
        </WindowTitle>
        <CaptionButtons>
          <CaptionButton $w={34}>
            <svg width="14" height="12" viewBox="0 0 14 12">
              <path d="M0 11.500H14" stroke="#222" strokeWidth="2" />
            </svg>
          </CaptionButton>
          <CaptionButton $w={34}>
            <svg width="15" height="15" viewBox="0 0 15 15">
              <path d="M2.500 1.500H14V12" fill="none" stroke="#222" strokeWidth="1.600" />
              <path d="M.6 5V14.400H12.400V4.500" fill="none" stroke="#222" strokeWidth="1.200" />
              <path d="M0 5.300H13" stroke="#222" strokeWidth="2.600" />
            </svg>
          </CaptionButton>
          <CaptionButton $w={58} $close>
            <svg width="11" height="10" viewBox="0 0 11 10">
              <path d="M1 .5 10 9.500M10 .5 1 9.500" stroke="#fff" strokeWidth="2.200" />
            </svg>
          </CaptionButton>
        </CaptionButtons>
      </TitleBar>
      <MenuBar>
        {menu.map(([label, ls]) => (
          <UiText key={label} $size={14.6} $ls={ls} $color="#6d6d6d">
            {label}
          </UiText>
        ))}
      </MenuBar>
      <ToolBar>
        <NavArrow />
        <BackLabel $size={14.6} $ls={-0.4} $color="#a0a0a0">
          Zurück
        </BackLabel>
        <Caret />
        <NavArrow forward />
        <ToolSeparator />
        <House />
      </ToolBar>
      <Body>
        <Sidebar>
          <SidebarTitle $ls={-0.34}>Wählen Sie eine Aufgabe...</SidebarTitle>
          <TaskTree />
          <SystemInfo>
            <SystemInfoIcon />
            <SystemLink $color="#0066cc" $ls={0}>
              Systeminformationen
            </SystemLink>
          </SystemInfo>
        </Sidebar>
        <Page>
          <PageHeader>
            <HeaderTitle>
              <ResolutionIcon />
              <PageTitle>Auflösung ändern</PageTitle>
            </HeaderTitle>
            <RestoreDefaults>Standardwerte wiederherstellen</RestoreDefaults>
          </PageHeader>
          <Description>
            Sie können die Menge der Informationen, die auf dem Bildschirm eingeblendet wird, einstellen und Flimmern verringern. Sie können auch das HD-Format auswählen, wenn Sie ein HDTV-Gerät verwenden und ein länderspezifisches Signal für Ihr Fernsehgerät mit
            <br />
            Standardauflösung festlegen.
          </Description>
          <Settings />
        </Page>
        <VScroll $w={19} $mt={1}>
          <VButton>
            <Chevron dir="up" />
          </VButton>
          <VThumb $h={621} />
          <VButton>
            <Chevron dir="down" />
          </VButton>
        </VScroll>
      </Body>
      <CustomizeDialog />
      <TaskBar>
        <StartSlot>
          <WindowsLogo />
        </StartSlot>
        {apps.map((icon, i) => (
          <AppSlot key={i}>{icon}</AppSlot>
        ))}
        <Tray>
          {trayIcons.map((icon, i) => (
            <TraySlot key={i}>{icon}</TraySlot>
          ))}
          <Clock>
            <UiText $size={15} $ls={-0.7} $color="#fff">
              14:02
            </UiText>
            <UiText $size={15} $ls={-0.7} $color="#fff">
              19.04.2015
            </UiText>
          </Clock>
        </Tray>
      </TaskBar>
    </Screen>
  );
}
